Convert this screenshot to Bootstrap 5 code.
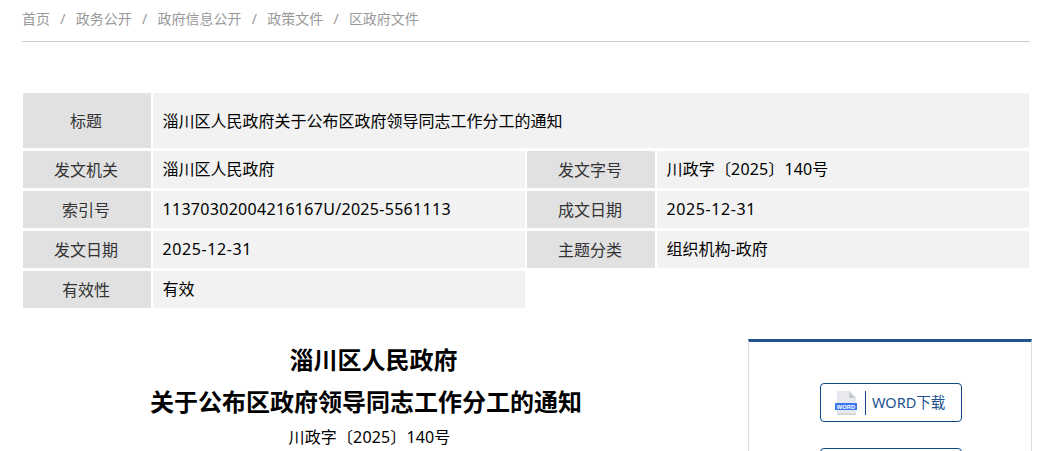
<!DOCTYPE html>
<html lang="zh-CN">
<head>
<meta charset="utf-8">
<title>区政府文件</title>
<link href="https://cdn.jsdelivr.net/npm/bootstrap@5.3.0/dist/css/bootstrap.min.css" rel="stylesheet">
<style>
html,body{height:451px;overflow:hidden;background:#fff}
body{font-family:"Noto Sans","Noto Sans CJK SC",sans-serif;color:#000}
.pagewrap{width:1008px;margin-left:22px}
.crumbs{height:42px;border-bottom:1px solid #ccc;font-size:14px;color:#999;line-height:20px;padding-top:9px}
.crumbs a{color:#999;text-decoration:none}
.crumbs i{font-style:normal;padding:0 10.250px}
.infogrid{margin:51px 0 0 1px;width:1006px;display:grid;grid-template-columns:128px 372px 128px 372px;grid-template-rows:55px repeat(4,37px);gap:3px 2px;font-size:16px}
.infogrid>div{display:flex;align-items:center}
.lab{background:#e1e1e1;color:#333;justify-content:center;padding:1px 2px 0 0}
.val{background:#f2f2f2;color:#000;padding-left:9.500px;padding-bottom:1px}
.span3{grid-column:span 3;padding-bottom:0}
.sp1{letter-spacing:.3px}
.sp2{letter-spacing:.6px}
.sp3{letter-spacing:.15px}
.lower{margin-top:31px}
.artic{width:688px;flex:none;margin-left:1px;text-align:center}
.artic h1{font-size:24px;font-weight:700;line-height:42px;margin:0}
.artic h1:first-child{padding-left:13px}
.artic h1+h1{padding-right:2px}
.artic p{font-size:16px;line-height:22px;margin:3px 0 0;padding-left:5px;letter-spacing:.15px}
.sidebox{width:284px;flex:none;margin-left:37px;height:200px;border-top:3px solid #23538f;border-left:1px solid #ddd;border-right:1px solid #ddd;padding:41px 0 0 2px}
.dl{width:142px;height:39px;margin:0 auto 26px;border:1px solid #0c4a8a;border-radius:4px;color:#23538f;font-size:14.500px;text-decoration:none;padding-left:14px}
.dl .ic{width:22px;height:24px;flex:none}
.dl .sep{width:1px;height:24px;background:#0c4a8a;margin:0 6px 0 8px}
</style>
</head>
<body>
<div class="pagewrap">
  <nav class="crumbs"><a href="#">首页</a><i>/</i><a href="#">政务公开</a><i>/</i><a href="#">政府信息公开</a><i>/</i><a href="#">政策文件</a><i>/</i><a href="#">区政府文件</a></nav>
  <div class="infogrid">
    <div class="lab">标题</div><div class="val span3">淄川区人民政府关于公布区政府领导同志工作分工的通知</div>
    <div class="lab">发文机关</div><div class="val">淄川区人民政府</div>
    <div class="lab">发文字号</div><div class="val sp3">川政字〔2025〕140号</div>
    <div class="lab">索引号</div><div class="val sp1">11370302004216167U/2025-5561113</div>
    <div class="lab">成文日期</div><div class="val sp2">2025-12-31</div>
    <div class="lab">发文日期</div><div class="val sp2">2025-12-31</div>
    <div class="lab">主题分类</div><div class="val">组织机构-政府</div>
    <div class="lab">有效性</div><div class="val">有效</div>
  </div>
  <div class="d-flex lower">
    <div class="artic">
      <h1>淄川区人民政府</h1>
      <h1>关于公布区政府领导同志工作分工的通知</h1>
      <p>川政字〔2025〕140号</p>
    </div>
    <div class="sidebox">
      <a class="dl d-flex align-items-center" href="#">
        <svg class="ic" viewBox="0 0 22 24"><path d="M2 0h12l7 7v17H2z" fill="#e8e9ee"/><path d="M14 0l7 7h-7z" fill="#c5cad3"/><path d="M2 22.500h19V24H2z" fill="#cfd2d9"/><rect y="12" width="22" height="7" fill="#3b78f0"/><text x="11" y="17.800" font-size="5.800" font-weight="700" fill="#fff" text-anchor="middle" font-family="Liberation Sans">WORD</text></svg>
        <span class="sep"></span><span>WORD下载</span>
      </a>
      <a class="dl d-flex align-items-center" href="#"></a>
    </div>
  </div>
</div>
<script src="https://cdn.jsdelivr.net/npm/bootstrap@5.3.0/dist/js/bootstrap.bundle.min.js"></script>
</body>
</html>
